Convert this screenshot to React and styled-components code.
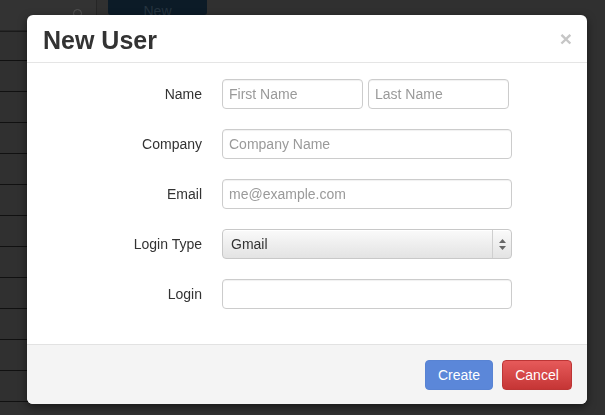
import React from "react";
import styled, { createGlobalStyle } from "styled-components";

const GlobalStyle = createGlobalStyle`
  html, body {
    margin: 0;
    padding: 0;
    background: #303030;
    font-family: "Liberation Sans", Arial, sans-serif;
  }
`;

const Page = styled.div`
  width: 605px;
  height: 415px;
  overflow: hidden;
  background: #303030;
`;

const Toolbar = styled.div`
  display: flex;
  align-items: flex-start;
  gap: 11px;
  height: 31px;
  width: 300px;
  border-bottom: 1px solid #1a1a1a;
`;

const SearchBox = styled.div`
  position: relative;
  width: 97px;
  height: 31px;
  box-sizing: border-box;
  background: #333;
  border: 1px solid #262626;
  border-left: none;
  border-top: none;
  border-radius: 0 0 4px 0;
`;

const SearchIcon = styled.span`
  position: absolute;
  right: 14px;
  top: 9px;
  width: 7px;
  height: 7px;
  border: 1.5px solid #555;
  border-radius: 50%;
`;

const DimButton = styled.div`
  width: 99px;
  height: 15px;
  background: #0c1b27;
  border-radius: 0 0 3px 3px;
  color: #26343f;
  font-size: 14px;
  text-align: center;
  line-height: 22px;
  overflow: hidden;
`;

const TableRow = styled.div`
  width: 300px;
  height: ${p => (p.$head ? "28px" : "30px")};
  border-bottom: 1px solid #111;
`;

const Modal = styled.div`
  position: fixed;
  left: 27px;
  top: 15px;
  width: 560px;
  height: 389px;
  background: #fff;
  border-radius: 6px;
  box-shadow: 0 3px 8px rgba(0, 0, 0, 0.5);
  display: flex;
  flex-direction: column;
  overflow: hidden;
`;

const Header = styled.div`
  height: 48px;
  box-sizing: border-box;
  border-bottom: 1px solid #e5e5e5;
  display: flex;
  align-items: center;
  justify-content: space-between;
  padding: 0 16px;
`;

const Title = styled.h3`
  margin: 0;
  font-size: 25px;
  font-weight: bold;
  color: #333;
  line-height: 30px;
  padding-top: 3px;
`;

const Close = styled.span`
  color: #c6c6c6;
  font-size: 21px;
  font-weight: bold;
  line-height: 1;
  margin-right: -1px;
`;

const Body = styled.div`
  flex: 1;
  padding: 16px 15px 0;
  display: grid;
  grid-template-columns: 160px 290px;
  column-gap: 20px;
  row-gap: 20px;
  align-content: start;
`;

const Label = styled.label`
  text-align: right;
  font-size: 14px;
  color: #333;
  line-height: 30px;
`;

const Pair = styled.div`
  display: flex;
  gap: 5px;
`;

const Input = styled.input`
  box-sizing: border-box;
  width: ${p => p.$w || "290px"};
  height: 30px;
  padding: 0 6px;
  border: 1px solid #ccc;
  border-radius: 4px;
  font-family: inherit;
  font-size: 14px;
  color: #555;
  background: #fff;
  box-shadow: inset 0 1px 1px rgba(0, 0, 0, 0.06);
  outline: none;

  &::placeholder {
    color: #9a9a9a;
  }
`;

const Select = styled.div`
  box-sizing: border-box;
  width: 290px;
  height: 30px;
  border: 1px solid #c8c8c8;
  border-radius: 4px;
  background: linear-gradient(#fafafa, #e3e3e3);
  display: flex;
  align-items: center;
  font-size: 14px;
  color: #333;
  box-shadow: inset 0 1px 0 #fff;
`;

const SelectText = styled.span`
  flex: 1;
  padding-left: 8px;
`;

const Arrows = styled.span`
  width: 18px;
  height: 100%;
  border-left: 1px solid #cfcfcf;
  display: flex;
  align-items: center;
  justify-content: center;
`;

const Footer = styled.div`
  height: 60px;
  box-sizing: border-box;
  background: #f4f4f4;
  border-top: 1px solid #e2e2e2;
  display: flex;
  justify-content: flex-end;
  align-items: center;
  gap: 9px;
  padding: 0 15px;
`;

const Button = styled.button`
  height: 30px;
  width: ${p => p.$w};
  border-radius: 4px;
  border: 1px solid ${p => (p.$danger ? "#bd3535" : "#5883d3")};
  background: ${p =>
    p.$danger
      ? "linear-gradient(#e65a5a, #c53535)"
      : "#5b87d9"};
  color: #fff;
  font-family: inherit;
  font-size: 14px;
  padding: 0;
`;

export default function App() {
  return (
    <Page>
      <GlobalStyle />
      <Toolbar>
        <SearchBox>
          <SearchIcon />
        </SearchBox>
        <DimButton>New</DimButton>
      </Toolbar>
      <TableRow $head />
      {Array.from({ length: 11 }).map((_, i) => (
        <TableRow key={i} />
      ))}
      <Modal>
        <Header>
          <Title>New User</Title>
          <Close>×</Close>
        </Header>
        <Body>
          <Label>Name</Label>
          <Pair>
            <Input $w="141px" placeholder="First Name" />
            <Input $w="141px" placeholder="Last Name" />
          </Pair>
          <Label>Company</Label>
          <Input placeholder="Company Name" />
          <Label>Email</Label>
          <Input placeholder="me@example.com" />
          <Label>Login Type</Label>
          <Select>
            <SelectText>Gmail</SelectText>
            <Arrows>
              <svg width="7" height="11" viewBox="0 0 7 11">
                <path d="M3.5 0 L7 4 L0 4 Z" fill="#666" />
                <path d="M0 7 L7 7 L3.5 11 Z" fill="#666" />
              </svg>
            </Arrows>
          </Select>
          <Label>Login</Label>
          <Input />
        </Body>
        <Footer>
          <Button $w="68px">Create</Button>
          <Button $w="70px" $danger>
            Cancel
          </Button>
        </Footer>
      </Modal>
    </Page>
  );
}
